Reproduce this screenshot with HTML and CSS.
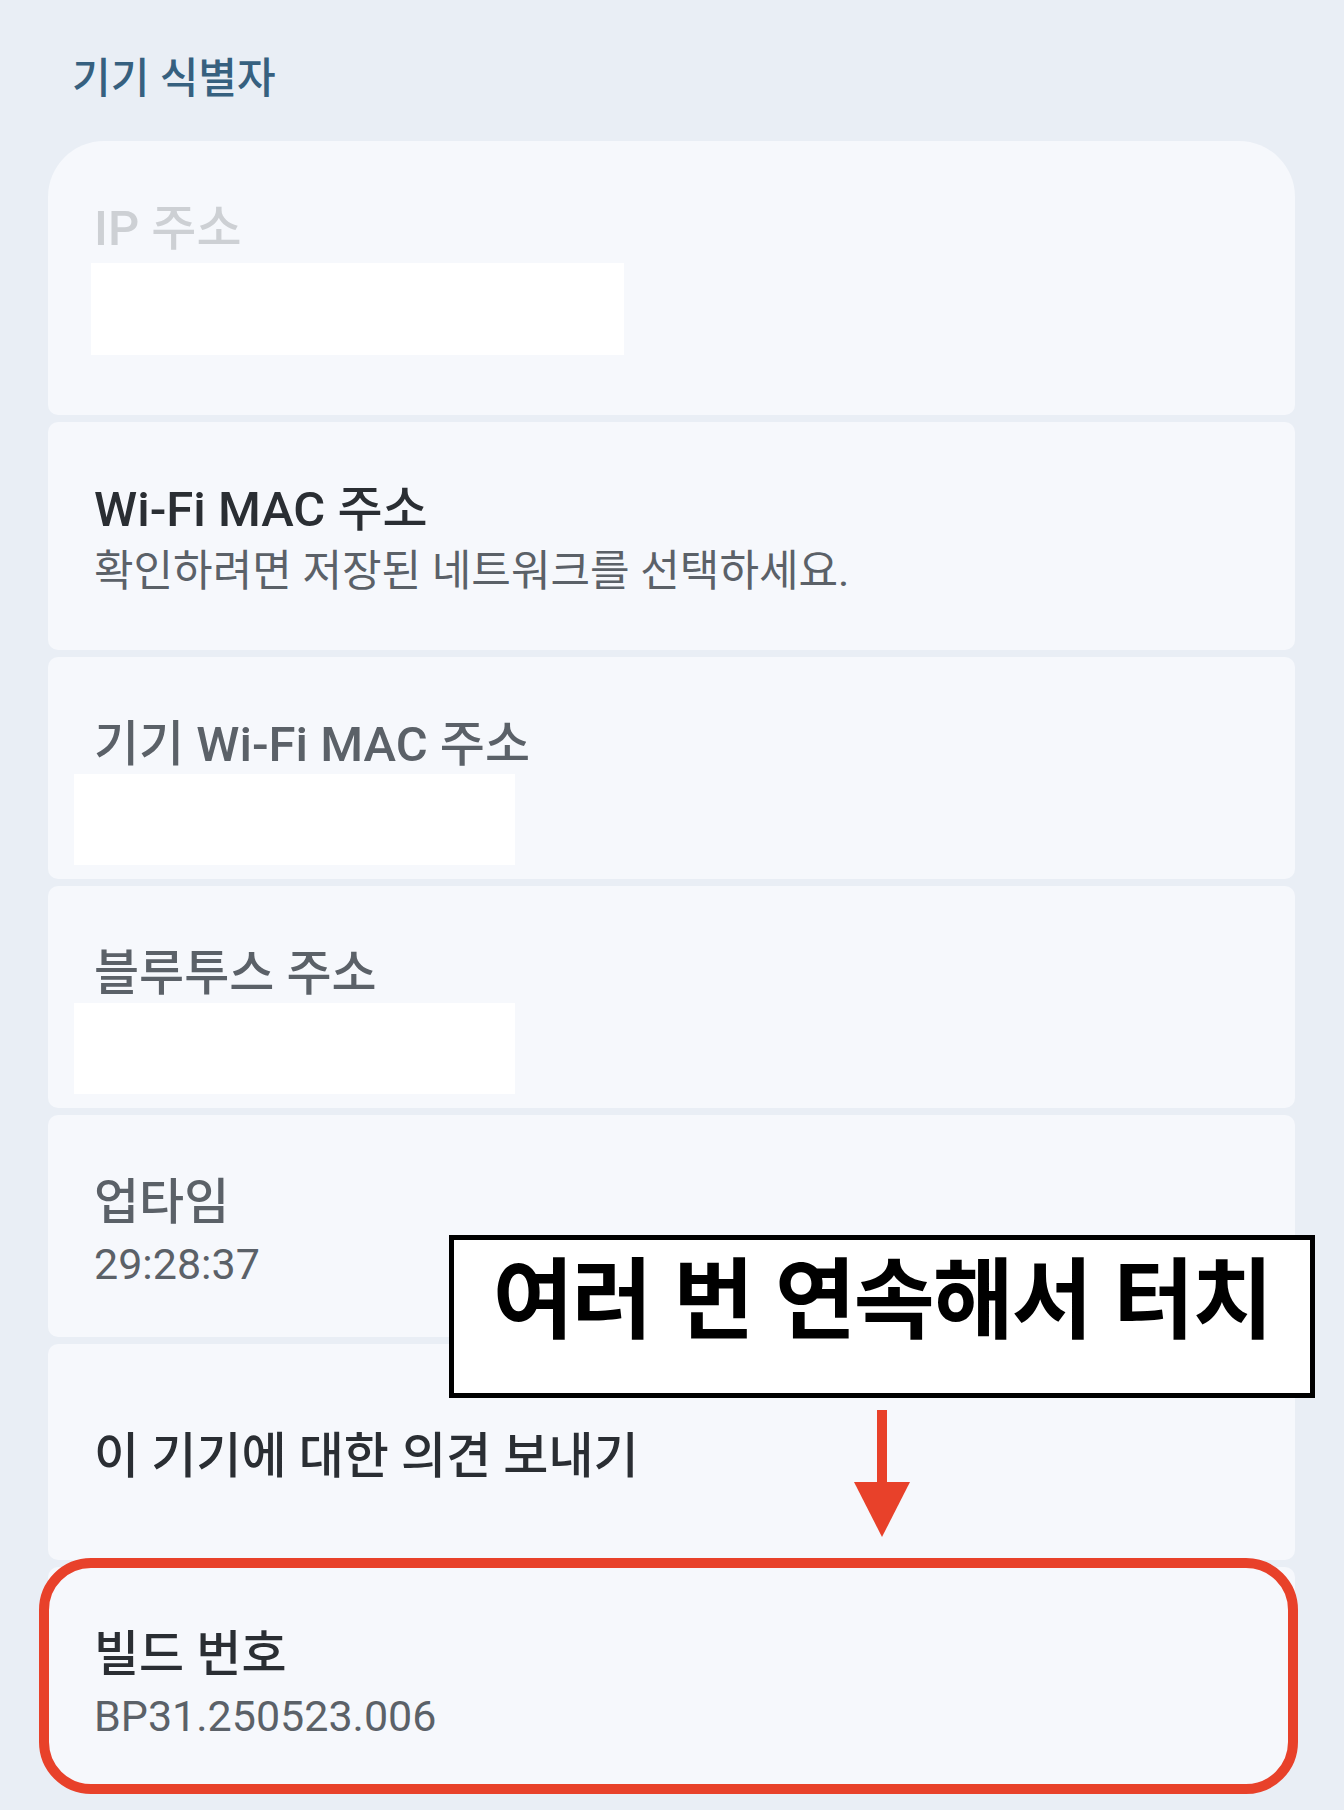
FILE: index.html
```html
<!DOCTYPE html>
<html lang="ko">
<head>
  <meta charset="UTF-8" />
  <meta name="viewport" content="width=device-width, initial-scale=1.0"/>
  <title>기기 식별자</title>
  <link rel="stylesheet" href="styles.css">
</head>
<body>
  <div class="screen">
    <h1 class="section-title">기기 식별자</h1>

    <ul class="list">
      <li class="item item--first">
        <div class="item-title is-disabled">IP 주소</div>
        <div class="redact redact--ip"></div>
      </li>
      <li class="item item--tall">
        <div class="item-title is-strong">Wi-Fi MAC 주소</div>
        <div class="item-summary">확인하려면 저장된 네트워크를 선택하세요.</div>
      </li>
      <li class="item">
        <div class="item-title">기기 Wi-Fi MAC 주소</div>
        <div class="redact"></div>
      </li>
      <li class="item">
        <div class="item-title">블루투스 주소</div>
        <div class="redact"></div>
      </li>
      <li class="item">
        <div class="item-title">업타임</div>
        <div class="item-summary">29:28:37</div>
      </li>
      <li class="item item--single">
        <div class="item-title is-strong">이 기기에 대한 의견 보내기</div>
      </li>
      <li class="item item--last highlight">
        <div class="item-title is-strong">빌드 번호</div>
        <div class="item-summary">BP31.250523.006</div>
      </li>
    </ul>

    <!-- annotation -->
    <div class="callout">여러 번 연속해서 터치</div>
    <svg class="callout-arrow" width="56" height="128" viewBox="0 0 56 128">
      <rect x="23" y="0" width="10" height="74" fill="#e8412a"/>
      <polygon points="0,72 56,72 28,127" fill="#e8412a"/>
    </svg>
  </div>
</body>
</html>
```

FILE: styles.css
```css
:root {
  --page: #e9eef5;
  --card: #f6f8fc;
  --text-strong: #2a2e33;
  --text-muted: #5b6168;
  --accent: #36607f;
  --red: #e8412a;
}

body {
  margin: 0;
  background: var(--page);
  font-family: Roboto, "Noto Sans CJK KR", sans-serif;
}

.screen {
  position: relative;
  padding: 55px 49px 0 48px;
  min-height: 1810px;
  box-sizing: border-box;
}

.section-title {
  margin: 0 0 38px 24px;
  font-size: 42px;
  font-weight: 500;
  line-height: 48px;
  color: var(--accent);
}

.list {
  list-style: none;
  margin: 0;
  padding: 0;
  display: flex;
  flex-direction: column;
  gap: 7px;
}

.item {
  box-sizing: border-box;
  height: 222px;
  padding: 62px 46px 0;
  background: var(--card);
  border-radius: 10px;
}
.item--first {
  height: 274px;
  border-radius: 56px 56px 10px 10px;
}
.item--tall {
  height: 228px;
}
.item--single {
  height: 216px;
  padding-top: 87px;
}
.item--last {
  border-radius: 10px 10px 44px 44px;
}

.item-title {
  font-size: 49px;
  font-weight: 500;
  line-height: 52px;
  color: var(--text-muted);
  white-space: nowrap;
}
.item-title.is-strong {
  color: var(--text-strong);
}
.item-title.is-disabled {
  color: #cdd0d4;
}

.item-summary {
  margin-top: 10px;
  font-size: 43px;
  line-height: 50px;
  color: var(--text-muted);
  white-space: nowrap;
}

/* hidden values, painted over in the screenshot */
.redact {
  width: 441px;
  height: 91px;
  margin: 3px 0 0 -20px;
  background: #fff;
}
.redact--ip {
  width: 533px;
  height: 92px;
  margin: 8px 0 0 -3px;
}

.highlight {
  position: relative;
}
.highlight::after {
  content: "";
  position: absolute;
  top: -9px;
  left: -9px;
  right: -3px;
  bottom: -5px;
  border: 10px solid var(--red);
  border-radius: 52px;
}

.callout {
  position: absolute;
  left: 449px;
  top: 1235px;
  width: 866px;
  height: 163px;
  box-sizing: border-box;
  padding-top: 3px;
  border: 5px solid #000;
  background: #fff;
  text-align: center;
  font-family: "Noto Sans CJK KR", sans-serif;
  font-size: 88px;
  font-weight: 700;
  line-height: 100px;
  letter-spacing: -2px;
  color: #000;
}

.callout-arrow {
  position: absolute;
  left: 854px;
  top: 1410px;
}
```
